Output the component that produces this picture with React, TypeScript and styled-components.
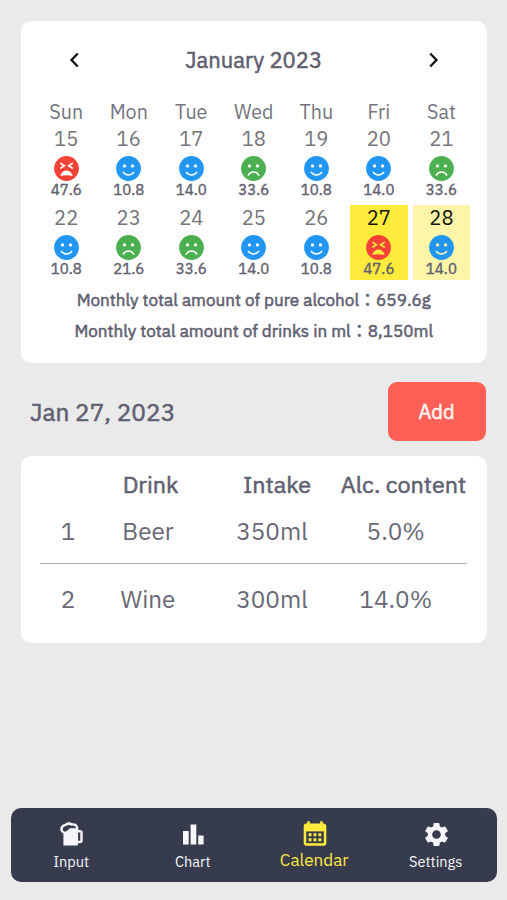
import React from 'react';
import styled, { createGlobalStyle, css } from 'styled-components';
import { MdSettings } from 'react-icons/md';

const GlobalStyle = createGlobalStyle`
  * { box-sizing: border-box; }
  body {
    margin: 0;
    background: #eaeaea;
    color: #5f5f72;
    font-family: "IBM Plex Sans", Roboto, "Noto Sans CJK JP", sans-serif;
  }
`;

/* Regular letterforms thickened by an outline, which keeps their narrow widths. */
const emphasis = css`
  font-weight: 400;
  -webkit-text-stroke: 0.55px currentColor;
`;

const Screen = styled.main`
  display: flex;
  flex-direction: column;
  width: 507px;
  height: 900px;
  padding: 20.5px 10.5px 18.5px;
  overflow: hidden;
`;

const Card = styled.section<{ $height: number }>`
  height: ${(p) => p.$height}px;
  margin: 0 9.5px 0 10px;
  background: #fff;
  border-radius: 11px;
  flex: none;
`;

const MonthBar = styled.header`
  display: flex;
  align-items: center;
  justify-content: space-between;
  height: 79px;
  padding: 0 47px 0 47px;
`;

const MonthTitle = styled.h1`
  ${emphasis}
  margin: 0;
  font-size: 22px;
  line-height: 28px;
`;

const ArrowButton = styled.button`
  display: flex;
  padding: 0;
  border: 0;
  background: none;
  color: #111;
`;

const Week = styled.div`
  display: grid;
  grid-template-columns: repeat(7, 57.4px);
  column-gap: 5.15px;
  padding-left: 17px;
  text-align: center;
`;

const Weekday = styled.div`
  height: 26px;
  line-height: 23px;
  font-size: 19.7px;
  color: #74747e;
`;

type Highlight = 'selected' | 'today' | undefined;

const Day = styled.div<{ $highlight: Highlight }>`
  display: flex;
  flex-direction: column;
  align-items: center;
  height: 75px;
  margin-bottom: 4.4px;
  --cell: ${(p) =>
    p.$highlight === 'selected' ? '#ffeb3b' : p.$highlight === 'today' ? '#fff5a8' : '#fff'};
  background: var(--cell);
`;

const DateNumber = styled.span<{ $strong: boolean }>`
  height: 30.5px;
  line-height: 26px;
  font-size: 20.2px;
  color: ${(p) => (p.$strong ? '#15150f' : '#74747a')};
`;

const Grams = styled.span`
  font-weight: 400;
  -webkit-text-stroke: 0.45px currentColor;
  line-height: 18px;
  font-size: 15px;
  color: #62626f;
`;

const FaceSvg = styled.svg`
  display: block;
  flex: none;
  width: 25px;
  height: 25px;
`;

const Total = styled.p<{ $gap: number }>`
  ${emphasis}
  margin: ${(p) => p.$gap}px 0 0;
  text-align: center;
  font-size: 17.1px;
  line-height: 24px;
  white-space: nowrap;
`;

const DateBar = styled.div`
  display: flex;
  align-items: center;
  justify-content: space-between;
  flex: none;
  height: 58.5px;
  margin: 19.7px 11px 15px 19.5px;
`;

const DateTitle = styled.h2`
  ${emphasis}
  margin: 2px 0 0;
  font-size: 24.4px;
  line-height: 32px;
`;

const AddButton = styled.button`
  width: 98px;
  height: 58.5px;
  padding: 0;
  border: 0;
  border-radius: 9px;
  background: #ff6056;
  color: #fff3f1;
  font: 400 20.1px "IBM Plex Sans", Roboto, sans-serif;
  ${emphasis}
`;

const rowGrid = css`
  display: grid;
  justify-items: center;
  align-items: center;
  white-space: nowrap;
`;

const TableHead = styled.div`
  ${rowGrid}
  ${emphasis}
  grid-template-columns: 74px 112px 141px 112px;
  height: 32px;
  margin-top: 12.8px;
  font-size: 23.4px;
`;

const TableRow = styled.div<{ $height: number }>`
  ${rowGrid}
  grid-template-columns: 56px 104px 144px 103.5px;
  height: ${(p) => p.$height}px;
  margin: 0 20px 0 19.5px;
  padding-bottom: 2px;
  font-size: 24.3px;
  color: #686876;
  & + & {
    border-top: 1.4px solid #aeaeb1;
  }
`;

const Nav = styled.nav`
  display: grid;
  grid-template-columns: repeat(4, 1fr);
  flex: none;
  height: 73.5px;
  margin-top: auto;
  border-radius: 10px;
  background: #363c4d;
`;

const Tab = styled.a<{ $active?: boolean }>`
  display: flex;
  flex-direction: column;
  align-items: center;
  color: ${(p) => (p.$active ? '#ffeb3b' : '#f7f7fb')};
  font-size: ${(p) => (p.$active ? 17.1 : 14.6)}px;
  line-height: 20px;
`;

const TabIcon = styled.span<{ $active?: boolean }>`
  display: flex;
  align-items: center;
  justify-content: center;
  height: ${(p) => (p.$active ? 41.5 : 43.5)}px;
  padding: ${(p) => (p.$active ? 10 : 8.5)}px 0 0 1px;
`;

type Mood = 'good' | 'bad' | 'awful';
const moodColor: Record<Mood, string> = { good: '#2196f3', bad: '#4caf50', awful: '#f44336' };

function Face({ mood }: { mood: Mood }) {
  return (
    <FaceSvg viewBox="-12.5 -12.5 25 25" fill="none" stroke="var(--cell)" strokeWidth="1.5" strokeLinecap="round">
      <circle r="12.4" fill={moodColor[mood]} stroke="none" />
      {mood === 'awful' ? (
        <>
          <path d="M-5.7-5.1-2.2-2.7-5.7-.5M5.7-5.1 2.2-2.7 5.7-.5" strokeWidth="1.7" />
          <path d="M-6.3 7.6C-5 3.6-2.6 1.9 0 1.9S5 3.6 6.3 7.6C2.4 6.5-2.4 6.5-6.3 7.6Z" fill="var(--cell)" stroke="none" />
        </>
      ) : (
        <>
          <circle cx="-4" cy="-2.6" r="1.7" fill="var(--cell)" stroke="none" />
          <circle cx="4" cy="-2.6" r="1.7" fill="var(--cell)" stroke="none" />
          <path d={mood === 'good' ? 'M-5.2 3.9C-3 7.2 3 7.2 5.2 3.9' : 'M-5.2 6.6C-3.3 2.5 3.3 2.5 5.2 6.6'} />
        </>
      )}
    </FaceSvg>
  );
}

const weekdays = ['Sun', 'Mon', 'Tue', 'Wed', 'Thu', 'Fri', 'Sat'];

const days: { date: number; mood: Mood; grams: string; highlight?: Highlight }[] = [
  { date: 15, mood: 'awful', grams: '47.6' },
  { date: 16, mood: 'good', grams: '10.8' },
  { date: 17, mood: 'good', grams: '14.0' },
  { date: 18, mood: 'bad', grams: '33.6' },
  { date: 19, mood: 'good', grams: '10.8' },
  { date: 20, mood: 'good', grams: '14.0' },
  { date: 21, mood: 'bad', grams: '33.6' },
  { date: 22, mood: 'good', grams: '10.8' },
  { date: 23, mood: 'bad', grams: '21.6' },
  { date: 24, mood: 'bad', grams: '33.6' },
  { date: 25, mood: 'good', grams: '14.0' },
  { date: 26, mood: 'good', grams: '10.8' },
  { date: 27, mood: 'awful', grams: '47.6', highlight: 'selected' },
  { date: 28, mood: 'good', grams: '14.0', highlight: 'today' },
];

const Chevron = ({ d }: { d: string }) => (
  <svg width="12" height="16" viewBox="0 0 12 16" fill="none" stroke="currentColor" strokeWidth="2.3">
    <path d={d} />
  </svg>
);

const BeerIcon = () => (
  <svg width="23" height="24" viewBox="0 0 23 24" fill="currentColor" fillRule="evenodd">
    <path d="M3.4 23.4V11.4C1.5 10.8.2 9 .2 7c0-2.8 2-4.7 4.6-5.1C6.6 0 10.3-.2 12.2 1.3c3.3-.5 5.8 1.7 6.1 4.3V8h1.9c1.5 0 2.5 1 2.5 2.5v8.2c0 1.5-1 2.5-2.5 2.5h-2.4v2.2zM2.8 7c0 1.7 1.2 2.9 2.7 2.6 2.7-.6 3-3.4 5-3.4H16c-.3-2.2-2.5-3.2-4.7-2.4C10 2.6 7.5 2.6 6.2 4 4.2 4.2 2.8 5.2 2.8 7zM18.1 10.4v8.4h2.2v-8.4z" />
  </svg>
);

const ChartIcon = () => (
  <svg width="21" height="21" viewBox="0 0 21 21" fill="currentColor">
    <path d="M0 7h5.7v13.6H0zM7.6.4h5.7v20.2H7.6zM15.2 11.4h5.4v9.2h-5.4z" />
  </svg>
);

const CalendarIcon = () => (
  <svg width="24" height="25" viewBox="0 0 24 25">
    <path
      fill="currentColor"
      d="M4.2.2h2.6v2.4h10.4V.2h2.6v2.4h1c1.5 0 2.5 1 2.5 2.5v17.1c0 1.5-1 2.5-2.5 2.5H3.2c-1.5 0-2.5-1-2.5-2.5V5.1c0-1.5 1-2.5 2.5-2.5h1z"
    />
    <path fill="#363c4d" d="M3.2 10.4h17.6v11.8H3.2z" />
    <path
      fill="currentColor"
      d="M5.6 12.3h2.9v2.9H5.6zM10.5 12.3h2.9v2.9h-2.9zM15.4 12.3h2.9v2.9h-2.9zM5.6 17.3h2.9v2.9H5.6zM10.5 17.3h2.9v2.9h-2.9zM15.4 17.3h2.9v2.9h-2.9z"
    />
  </svg>
);

const drinks = [
  { name: 'Beer', intake: '350ml', alc: '5.0%', height: 62.6 },
  { name: 'Wine', intake: '300ml', alc: '14.0%', height: 72.5 },
];

export default function App() {
  return (
    <>
      <GlobalStyle />
      <Screen>
        <Card $height={342}>
          <MonthBar>
            <ArrowButton aria-label="Previous month"><Chevron d="M9.8 1.5 3.5 8l6.3 6.5" /></ArrowButton>
            <MonthTitle>January 2023</MonthTitle>
            <ArrowButton aria-label="Next month"><Chevron d="M2.2 1.5 8.5 8l-6.3 6.5" /></ArrowButton>
          </MonthBar>
          <Week>
            {weekdays.map((d) => <Weekday key={d}>{d}</Weekday>)}
            {days.map((d) => (
              <Day key={d.date} $highlight={d.highlight}>
                <DateNumber $strong={!!d.highlight}>{d.date}</DateNumber>
                <Face mood={d.mood} />
                <Grams>{d.grams}</Grams>
              </Day>
            ))}
          </Week>
          <Total $gap={4}>Monthly total amount of pure alcohol：659.6g</Total>
          <Total $gap={6.5}>Monthly total amount of drinks in ml：8,150ml</Total>
        </Card>

        <DateBar>
          <DateTitle>Jan 27, 2023</DateTitle>
          <AddButton>Add</AddButton>
        </DateBar>

        <Card $height={187}>
          <TableHead>
            <span />
            <span>Drink</span>
            <span>Intake</span>
            <span>Alc. content</span>
          </TableHead>
          {drinks.map((d, i) => (
            <TableRow key={d.name} $height={d.height}>
              <span>{i + 1}</span>
              <span>{d.name}</span>
              <span>{d.intake}</span>
              <span>{d.alc}</span>
            </TableRow>
          ))}
        </Card>

        <Nav>
          <Tab><TabIcon><BeerIcon /></TabIcon>Input</Tab>
          <Tab><TabIcon><ChartIcon /></TabIcon>Chart</Tab>
          <Tab $active><TabIcon $active><CalendarIcon /></TabIcon>Calendar</Tab>
          <Tab><TabIcon><MdSettings size={29} /></TabIcon>Settings</Tab>
        </Nav>
      </Screen>
    </>
  );
}
